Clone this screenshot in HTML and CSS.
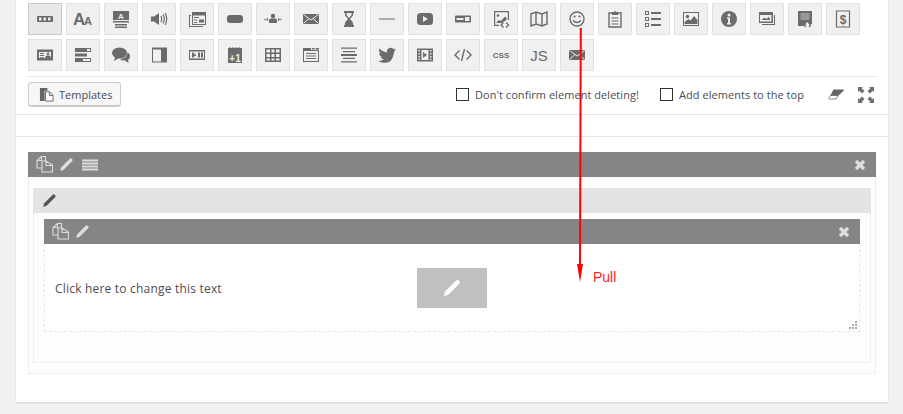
FILE: index.html
```html
<!DOCTYPE html>
<html lang="en">
<head>
    <meta charset="UTF-8">
    <meta name="viewport" content="width=device-width, initial-scale=1.0">
    <title>Page Builder</title>
    <link rel="stylesheet" href="styles.css">
</head>
<body>

    <svg class="defs" width="0" height="0">
        <symbol id="pencil" viewBox="0 0 16 16"><path d="M2 14l1-3.400 8-8a1.300 1.300 0 0 1 1.800 0l.5.500a1.300 1.300 0 0 1 0 1.800l-8 8z"/></symbol>
        <symbol id="copy" viewBox="0 0 17 17"><path d="M5.500 .5L1 4.500v7.500h4.500M5.500 .5h4v4M5.500 .5v4H1M10 5H6v11h10.500V9zM10 5v4.500h6.500" fill="none" stroke="currentColor" stroke-width="1.100"/></symbol>
        <symbol id="close" viewBox="0 0 12 12"><path d="M2 2l8 8M10 2l-8 8" fill="none" stroke="currentColor" stroke-width="3.400"/></symbol>
    </svg>

    <div class="panel">
        <div class="toolbar">
            <div class="tools">
                <button class="tool active"><svg class="ic" viewBox="0 0 20 20"><rect x="2" y="7" width="16" height="6" rx="1"/><path fill="#eee" d="M4 8.500h2.500v3H4zM8.500 8.500H11v3H8.500zM13 8.500h2.500v3H13z"/></svg></button>
                <button class="tool"><svg class="ic" viewBox="0 0 20 20"><text x="0" y="16" class="glyph" font-size="17">A</text><text x="11" y="16" class="glyph" font-size="11">A</text></svg></button>
                <button class="tool"><svg class="ic" viewBox="0 0 20 20"><rect x="2" y="2" width="16" height="9"/><text x="10" y="10" class="glyph light" font-size="8" text-anchor="middle">A</text><path d="M2 12h16v1.500H2zM4 15h12v1.500H4zM4 17.500h12V19H4z"/></svg></button>
                <button class="tool"><svg class="ic" viewBox="0 0 20 20"><path d="M2 7.500h3L10 4v12l-5-3.500H2z"/><path d="M12 7q1.500 3 0 6M14 5.500q2.500 4.500 0 9M16.200 4q3 6 0 12" fill="none" stroke="#6b6b6b" stroke-width="1.200"/></svg></button>
                <button class="tool"><svg class="ic" viewBox="0 0 20 20"><path d="M5 3h14v13H5zM6 6.500v8.500h12V6.500z" fill-rule="evenodd"/><path d="M2 6h2v1H3v10h13v1H2z"/><path d="M7 8h5v1H7zM7 10.500h3v1H7zM12 10.500h5v3h-5zM7 13h3v1H7z"/></svg></button>
                <button class="tool"><svg class="ic" viewBox="0 0 20 20"><rect x="2" y="6" width="16" height="8" rx="3"/></svg></button>
                <button class="tool"><svg class="ic" viewBox="0 0 20 20"><circle cx="10" cy="7" r="2.200"/><path d="M6 14v-3q0-1.500 2-1.500h4q2 0 2 1.500v3z"/><path d="M3 10.500l2-1.700v3.400zM17 10.500l-2-1.700v3.400zM1 10.500l1.500-1.200v2.400zM19 10.500l-1.500-1.200v2.400z"/></svg></button>
                <button class="tool"><svg class="ic" viewBox="0 0 20 20"><rect x="2" y="5" width="16" height="10"/><path d="M2.500 5.500L10 11l7.500-5.500M2.500 14.500l5.500-5M17.500 14.500l-5.500-5" fill="none" stroke="#eee"/></svg></button>
                <button class="tool"><svg class="ic" viewBox="0 0 20 20"><path d="M5 2h10v2h-1v2.500L11 10l3 3.500V16h1v2H5v-2h1v-2.500L9 10 6 6.500V4H5z"/><path fill="#eee" d="M7.500 4h5v2l-2.500 3-2.500-3z"/></svg></button>
                <button class="tool"><svg class="ic" viewBox="0 0 20 20"><rect x="2" y="9.500" width="16" height="1"/></svg></button>
                <button class="tool"><svg class="ic" viewBox="0 0 20 20"><rect x="2" y="4" width="16" height="12" rx="3.500"/><path fill="#eee" d="M8 7l5 3-5 3z"/></svg></button>
                <button class="tool"><svg class="ic" viewBox="0 0 20 20"><rect x="2" y="6.500" width="16" height="7" rx="1"/><path fill="#eee" d="M3.500 9h7v2h-7zM12 8h4.500v4H12z"/></svg></button>
                <button class="tool"><svg class="ic" viewBox="0 0 20 20"><path d="M3 2h15v9h-1.200V3.200H4.200v12.600H8V17H3z"/><circle cx="7" cy="6.500" r="1.300"/><path d="M5 14l3-3 2 1 4-4.500 1.500 1.500V11l-5 3z"/><path d="M12.500 13.500L10 16l2.500 2.500M15 13.500l2.500 2.500-2.500 2.500" fill="none" stroke="#6b6b6b" stroke-width="1.300"/></svg></button>
                <button class="tool"><svg class="ic line" viewBox="0 0 20 20"><path d="M2 5l5-2 6 2 5-2v12l-5 2-6-2-5 2zM7 3v12M13 5v12" stroke-width="1.400"/></svg></button>
                <button class="tool"><svg class="ic line" viewBox="0 0 20 20"><circle cx="10" cy="10" r="7" stroke-width="1.400"/><path d="M6 11.500q4 4 8 0" stroke-width="1.400"/><circle class="dot" cx="7.500" cy="7.500" r="1.100"/><circle class="dot" cx="12.500" cy="7.500" r="1.100"/></svg></button>
                <button class="tool"><svg class="ic line" viewBox="0 0 20 20"><path d="M7 4H4v14h12V4h-3" stroke-width="1.400"/><path class="dot" d="M7 3h2q1-2 2 0h2v3H7z"/><path d="M6.500 9h7M6.500 12h7M6.500 15h7" stroke-width="1.200"/></svg></button>
                <button class="tool"><svg class="ic" viewBox="0 0 20 20"><path d="M2 2h4v4H2zM3 3v2h2V3zM2 8h4v4H2zM3 9v2h2V9zM2 14h4v4H2zM3 15v2h2v-2z" fill-rule="evenodd"/><path d="M8 3h10v2H8zM8 9h10v2H8zM8 15h10v2H8z"/></svg></button>
                <button class="tool"><svg class="ic" viewBox="0 0 20 20"><path d="M2 3h16v14H2zM3 4v12h14V4z" fill-rule="evenodd"/><circle cx="6.500" cy="7.500" r="1.700"/><path d="M3.500 15v-2l4-3 2 1.500 3.500-4.500 3.500 4v4z"/></svg></button>
                <button class="tool"><svg class="ic" viewBox="0 0 20 20"><circle cx="10" cy="10" r="8"/><circle cx="10" cy="6" r="1.500" fill="#eee"/><path fill="#eee" d="M8 8.500h3V14h1v1.500H8V14h1V10H8z"/></svg></button>
                <button class="tool"><svg class="ic" viewBox="0 0 20 20"><path d="M2 3h14v11H2zM3 6v6.500h11.500V6z" fill-rule="evenodd"/><path d="M17 6h1v10H5v-1h12z"/><path d="M4.500 11l3-2.500 2 1.500 2-2 1.500 1.500V11z"/></svg></button>
                <button class="tool"><svg class="ic" viewBox="0 0 20 20"><path d="M3 2h14v13h-3l-2-2-3 3v1H3z"/><path fill="#eee" d="M5.500 4h9v7h-9z" opacity=".35"/><path d="M11 14.500l-1.700 1.700L11 18M14 14.500l1.700 1.700-1.700 1.800" fill="none" stroke="#6b6b6b" stroke-width="1.200"/></svg></button>
                <button class="tool"><svg class="ic line" viewBox="0 0 20 20"><path d="M3.500 2h13v16h-13z" stroke-width="1.200"/><text x="10" y="15" class="glyph" font-size="12" text-anchor="middle">$</text></svg></button>

                <button class="tool"><svg class="ic" viewBox="0 0 20 20"><path d="M2 4.500h16v11H2zM4 7v6h12V7z" fill-rule="evenodd"/><path d="M5 8h4v1H5zM5 10h4v1H5zM5 12h4v.800H5z"/><circle cx="13" cy="8.800" r="1.300"/><path d="M10.500 13v-1.500q0-1 1.500-1h2q1.500 0 1.500 1V13z"/></svg></button>
                <button class="tool"><svg class="ic" viewBox="0 0 20 20"><path d="M2 3h16v4H2zM14 4v2h3V4zM2 8.500h12v3H2zM2 13h16v4H2zM10 14v2h7v-2z" fill-rule="evenodd"/></svg></button>
                <button class="tool"><svg class="ic" viewBox="0 0 20 20"><ellipse cx="8.500" cy="8" rx="7.500" ry="5.500"/><path d="M4 12l-1 4 5-3z"/><path d="M16.500 7.500q3 1.500 2.500 4.500-.5 2-2 3l.8 3-4-2.500q-3 .3-5-1.500 7 0 7.700-6.500z"/></svg></button>
                <button class="tool"><svg class="ic" viewBox="0 0 20 20"><path d="M3 2.500h15v15H3zM4 4.500v12h8v-12z" fill-rule="evenodd"/></svg></button>
                <button class="tool"><svg class="ic" viewBox="0 0 20 20"><path d="M2 5h16v10H2zM3 6.500v7h14v-7z" fill-rule="evenodd"/><path d="M5 7l4.500 3L5 13zM11 7.500h2v5h-2zM14 7.500h2v5h-2z"/></svg></button>
                <button class="tool"><svg class="ic" viewBox="0 0 20 20"><path d="M3 3h1.500v-1h1v1h2v-1h1v1h2v-1h1v1h2v-1h1v1H17v15H3z"/><text x="10" y="16.500" class="glyph light" font-size="10" text-anchor="middle">+1</text></svg></button>
                <button class="tool"><svg class="ic" viewBox="0 0 20 20"><path d="M2 3h16v14H2zM3.500 4.500v3h3.500v-3zM8.500 4.500v3h3v-3zM13 4.500v3h3.500v-3zM3.500 9v3h3.500V9zM8.500 9v3h3V9zM13 9v3h3.500V9zM3.500 13.500v2h3.500v-2zM8.500 13.500v2h3v-2zM13 13.500v2h3.500v-2z" fill-rule="evenodd"/></svg></button>
                <button class="tool"><svg class="ic" viewBox="0 0 20 20"><path d="M2 3h8v2h8v12H2zM3 6v10h14V6z" fill-rule="evenodd"/><path d="M11 3h2.500v1.500H11zM14.500 3H18v1.500h-3.500zM5 8h10v1H5zM5 10.500h10v1H5zM5 13h10v1H5z"/></svg></button>
                <button class="tool"><svg class="ic" viewBox="0 0 20 20"><path d="M2 2.500h16v1.200H2zM4 6h12v1.200H4zM2 9h16v2H2zM4 12.800h12V14H4zM2 16.300h16v1.200H2z"/></svg></button>
                <button class="tool"><svg class="ic" viewBox="0 0 20 20"><path d="M19 4.500q-1 .5-2 .5 1-.6 1.500-1.800-1 .6-2.200.8a3.700 3.700 0 0 0-6.300 3.400Q6 7.200 2.500 3.500q-1.500 3 1.200 5-1 0-1.600-.5 0 3 3 3.800-1 .2-1.600 0 .8 2.300 3.400 2.500-2.500 2-6 1.600 10 4.500 14-2 2.200-3.400 2.200-7.300 1-.6 1.900-2.100z"/></svg></button>
                <button class="tool"><svg class="ic" viewBox="0 0 20 20"><path d="M2 3.500h16v13H2zM3.500 5v1.500h1.500V5zM3.500 8v1.500h1.500V8zM3.500 11v1.500h1.500V11zM3.500 13.800v1.200h1.500v-1.200zM15 5v1.500h1.500V5zM15 8v1.500h1.500V8zM15 11v1.500h1.500V11zM15 13.800v1.200h1.500v-1.200zM6.500 5v10h7V5z" fill-rule="evenodd"/><path d="M8 7l4 3-4 3z"/></svg></button>
                <button class="tool"><svg class="ic line" viewBox="0 0 20 20"><path d="M6.500 5.500L2 10l4.500 4.500M13.500 5.500L18 10l-4.500 4.500M11.500 4l-3 12" stroke-width="1.400"/></svg></button>
                <button class="tool"><svg class="ic" viewBox="0 0 20 20"><text x="10" y="13" class="glyph" font-size="8" text-anchor="middle">CSS</text></svg></button>
                <button class="tool"><svg class="ic" viewBox="0 0 20 20"><text x="10" y="16" class="glyph js" font-size="15" text-anchor="middle">JS</text></svg></button>
                <button class="tool"><svg class="ic" viewBox="0 0 20 20"><rect x="2" y="5" width="16" height="10"/><path d="M2.500 5.500L10 11l7.500-5.500M2.500 14.500l5.500-5M17.500 14.500l-5.500-5" fill="none" stroke="#eee"/></svg></button>
            </div>

            <div class="actions">
                <button class="templates">
                    <svg class="templates-ic" viewBox="0 0 16 16"><path d="M1 1h8v3H6v11H1z" fill="#666"/><path d="M7 5h4l4 4v6H7zM11 5v4h4" fill="#fff" stroke="#666"/></svg>
                    Templates
                </button>
                <div class="options">
                    <label class="check"><span class="box"></span>Don't confirm element deleting!</label>
                    <label class="check"><span class="box"></span>Add elements to the top</label>
                    <svg class="eraser" viewBox="0 0 16 11"><path d="M5.500 .5H15a.8.8 0 0 1 .6 1.200L10 7H2z" fill="#666"/><path d="M2.500 6.500h7.500L8 10H1.500a.8.8 0 0 1-.7-1.200z" fill="#fff" stroke="#666" stroke-width=".8"/></svg>
                    <svg class="expand" viewBox="0 0 16 16"><path d="M0 0h5L3.700 1.300 6.500 4 4 6.500 1.300 3.700 0 5zM16 0h-5l1.300 1.300L9.500 4 12 6.500l2.700-2.800L16 5zM0 16h5l-1.300-1.300L6.500 12 4 9.500l-2.700 2.800L0 11zM16 16h-5l1.300-1.300L9.500 12 12 9.500l2.700 2.800L16 11z" fill="#707070"/></svg>
                </div>
            </div>
        </div>

        <div class="builder">
            <div class="bar">
                <div class="bar-left">
                    <svg class="bar-ic"><use href="#copy"/></svg>
                    <svg class="bar-ic pen"><use href="#pencil"/></svg>
                    <svg class="bar-ic menu" viewBox="0 0 16 12"><path d="M0 .5h16v2H0zM0 3.500h16v2H0zM0 6.500h16v2H0zM0 9.500h16v2H0z" fill="currentColor"/></svg>
                </div>
                <svg class="bar-close"><use href="#close"/></svg>
            </div>
            <div class="row-body">
                <div class="col-head"><svg class="col-pen"><use href="#pencil"/></svg></div>
                <div class="col-body">
                    <div class="bar">
                        <div class="bar-left">
                            <svg class="bar-ic"><use href="#copy"/></svg>
                            <svg class="bar-ic pen"><use href="#pencil"/></svg>
                        </div>
                        <svg class="bar-close"><use href="#close"/></svg>
                    </div>
                    <div class="module">
                        <p class="module-text">Click here to change this text</p>
                        <div class="edit-btn"><svg class="edit-pen"><use href="#pencil"/></svg></div>
                        <svg class="grip" viewBox="0 0 8 8"><path d="M6 0h2v2H6zM3 3h2v2H3zM6 3h2v2H6zM0 6h2v2H0zM3 6h2v2H3zM6 6h2v2H6z" fill="#aaa"/></svg>
                    </div>
                </div>
            </div>
        </div>
    </div>

    <svg class="arrow" viewBox="0 0 12 256"><path d="M6.800 0L6 240" fill="none" stroke="#f00" stroke-width="2"/><path d="M3 236h6l-3 18z" fill="#f00"/></svg>
    <span class="pull">Pull</span>

</body>
</html>
```

FILE: styles.css
```css
html, body {
    height: 100%;
    overflow: hidden;
}

body {
    font-family: "Open Sans", "Noto Sans", sans-serif;
    background-color: #f1f1f1;
    color: #4b4b55;
    margin: 0;
    position: relative;
}

.defs {
    position: absolute;
}

.panel {
    width: 872px;
    height: 402px;
    margin-left: 16px;
    background-color: #fff;
    box-shadow: 0 1px 2px rgba(0, 0, 0, 0.12);
}

.toolbar {
    padding: 3px 12px 0;
    border-bottom: 1px solid #e5e5e5;
}

.tools {
    display: flex;
    flex-wrap: wrap;
    gap: 4px;
}

.tool {
    width: 34px;
    height: 32px;
    padding: 0;
    display: flex;
    align-items: center;
    justify-content: center;
    background-color: #f0f0f0;
    border: 1px solid #e2e2e2;
}

.tool.active {
    background-color: #e8e8e8;
    border-color: #c8c8c8;
}

.ic {
    width: 20px;
    height: 20px;
    fill: #6b6b6b;
}

.ic.line {
    fill: none;
    stroke: #6b6b6b;
}

.ic .dot {
    fill: #6b6b6b;
    stroke: none;
}

.ic .glyph {
    font-family: "Liberation Sans", sans-serif;
    font-weight: bold;
    stroke: none;
    fill: #6b6b6b;
}

.ic .glyph.light {
    fill: #eee;
}

.ic .glyph.js {
    font-weight: normal;
}

.actions {
    display: flex;
    align-items: center;
    justify-content: space-between;
    margin-top: 5px;
    padding: 5px 0 7px;
    border-top: 1px solid #e5e5e5;
}

.templates {
    width: 93px;
    height: 25px;
    padding: 0 0 0 10px;
    display: flex;
    align-items: center;
    gap: 5px;
    font-family: inherit;
    font-size: 11px;
    color: #4b4b55;
    background-color: #f7f7f7;
    border: 1px solid #ccc;
    border-bottom-width: 2px;
    border-radius: 3px;
}

.templates-ic {
    width: 15px;
    height: 15px;
}

.options {
    display: flex;
    align-items: center;
}

.check {
    display: flex;
    align-items: center;
    gap: 6px;
    font-size: 11px;
    letter-spacing: 0.05px;
    margin-right: 21px;
}

.box {
    width: 11px;
    height: 11px;
    border: 1px solid #333;
    background-color: #fff;
}

.eraser {
    width: 16px;
    height: 11px;
    margin: 0 14px 0 3px;
}

.expand {
    width: 16px;
    height: 16px;
    margin-right: 2px;
}

.builder {
    margin-top: 21px;
    padding: 15px 12px 0;
    border-top: 1px solid #e5e5e5;
}

.bar {
    height: 25px;
    padding: 0 10px 0 8px;
    display: flex;
    align-items: center;
    justify-content: space-between;
    background-color: #858585;
    color: #ddd;
}

.bar-left {
    display: flex;
    align-items: center;
    gap: 6px;
}

.bar-ic {
    width: 17px;
    height: 17px;
    fill: #ddd;
}

.bar-ic.pen {
    width: 17px;
    height: 17px;
    margin-left: -1px;
}

.bar-ic.menu {
    width: 16px;
    height: 12px;
    margin-left: 1px;
}

.bar-close {
    width: 12px;
    height: 12px;
    margin-top: 1px;
}

.row-body {
    box-sizing: border-box;
    height: 197px;
    padding: 11px 4px 0;
    background-color: #fdfdfd;
    border: 1px dotted #e0e0e0;
    border-top: none;
}

.col-head {
    height: 25px;
    display: flex;
    align-items: center;
    padding-left: 8px;
    background-color: #e3e3e3;
}

.col-pen {
    width: 17px;
    height: 17px;
    fill: #555;
}

.col-body {
    box-sizing: border-box;
    height: 150px;
    padding: 6px 10px 0;
    border: 1px dotted #e0e0e0;
    border-top: none;
}

.module {
    box-sizing: border-box;
    position: relative;
    height: 88px;
    display: flex;
    align-items: center;
    padding-left: 10px;
    background-color: #fff;
    border: 1px dashed #e8e8e8;
    border-top: none;
}

.module-text {
    margin: 2px 0 0;
    font-size: 12px;
    letter-spacing: 0.2px;
}

.edit-btn {
    position: absolute;
    left: 50%;
    top: 24px;
    width: 70px;
    height: 40px;
    margin-left: -35px;
    display: flex;
    align-items: center;
    justify-content: center;
    background-color: #c0c0c0;
}

.edit-pen {
    width: 22px;
    height: 22px;
    fill: #fff;
}

.grip {
    position: absolute;
    right: 2px;
    bottom: 2px;
    width: 8px;
    height: 8px;
}

.arrow {
    position: absolute;
    left: 574px;
    top: 28px;
    width: 12px;
    height: 256px;
}

.pull {
    position: absolute;
    left: 593px;
    top: 269px;
    font-family: "Liberation Sans", sans-serif;
    font-size: 14px;
    color: #f22;
}
```
